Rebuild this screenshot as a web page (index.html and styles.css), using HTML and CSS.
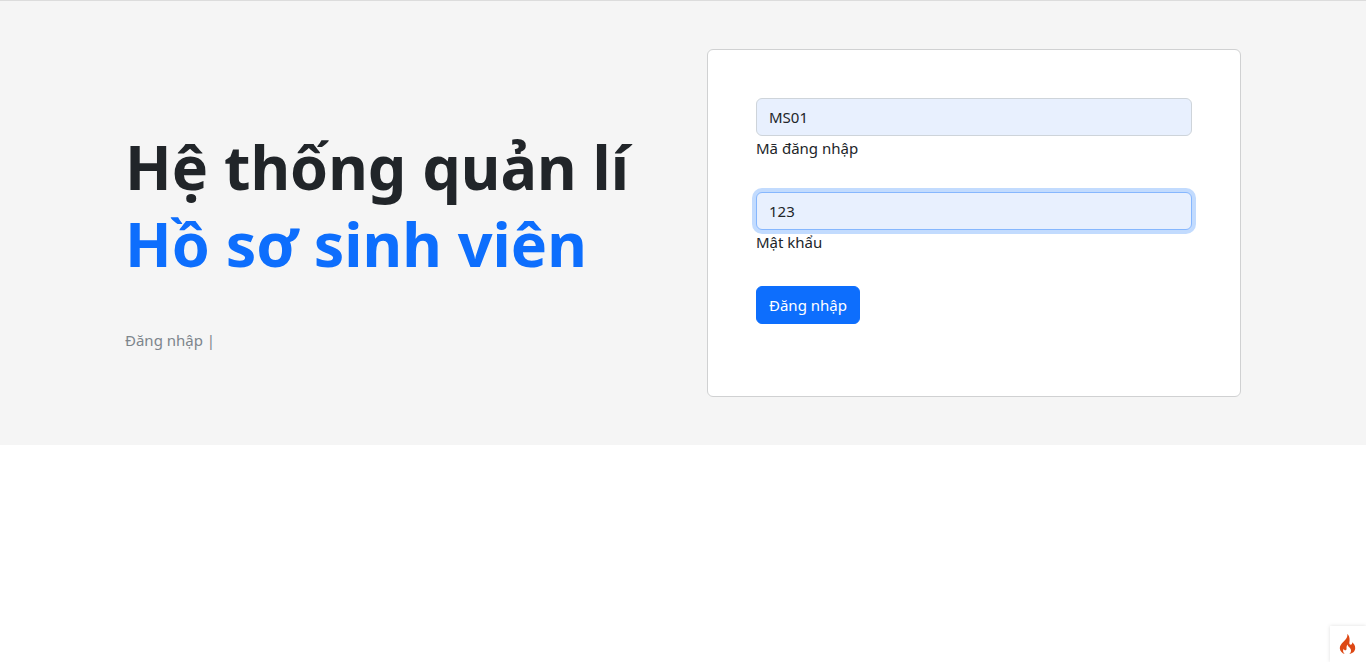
FILE: index.html
```
<!DOCTYPE html>
<html lang="vi">
<head>
<meta charset="utf-8">
<meta name="viewport" content="width=device-width, initial-scale=1">
<title>Đăng nhập</title>
<link rel="stylesheet" href="styles.css">
</head>
<body>
<main class="hero">
  <div class="container">
    <section class="intro">
      <h1 class="title">Hệ thống quản lí<br><span class="accent">Hồ sơ sinh viên</span></h1>
      <p class="lead">Đăng nhập |</p>
    </section>
    <section class="card">
      <form class="form">
        <div class="field">
          <input class="control" id="code" type="text" value="MS01">
          <label for="code">Mã đăng nhập</label>
        </div>
        <div class="field">
          <input class="control control-active" id="password" type="text" value="123">
          <label for="password">Mật khẩu</label>
        </div>
        <button class="button" type="submit">Đăng nhập</button>
      </form>
    </section>
  </div>
</main>
<button class="debug" type="button" aria-label="Debug">
  <svg class="flame" viewBox="0 0 16 20" aria-hidden="true"><path fill="#dd4814" d="M7.800 0C8.500 3 6.500 5.200 4.200 7.500C1.500 10 .3 12 .3 14.300C.4 17 2.500 19.300 5.200 20C3.600 18.600 3 16.800 4.200 14.800C4.500 16 5.300 16.500 6.300 16.200C8 15.500 6 13.200 8 10.500C8.200 12.800 11.500 13.800 11.500 16.500C11.500 18 11 19.200 9.800 20C13 19.400 15.500 17.500 15.700 14.200C15.800 11.600 14.400 9.800 12.700 8.300C12.900 9.600 12.300 10.700 11.200 10.700C9.300 10.700 9.900 8.500 10.100 6.500C10.300 3.500 9.300 1.200 7.800 0Z"/></svg>
</button>
</body>
</html>
```
FILE: styles.css
```
* { box-sizing: border-box; }
body {
  margin: 0;
  background: #fff;
  color: #212529;
  font-family: "Segoe UI", "Noto Sans", "Open Sans", sans-serif;
  font-size: 15px;
  line-height: 24px;
}
.hero {
  border-top: 1px solid #dcdcdc;
  background: #f5f5f5;
  padding: 48px 24px;
}
.container {
  display: grid;
  grid-template-columns: 1fr 1fr;
  gap: 48px;
  align-items: center;
  max-width: 1116px;
  margin: 0 auto;
}
.intro { padding-top: 34px; }
.title {
  margin: 0 0 46px;
  font-size: 61px;
  line-height: 77px;
  font-weight: 700;
  white-space: nowrap;
}
.accent { color: #0d6efd; }
.lead { margin: 0; color: #7d858c; }
.card {
  border: 1px solid #d0d1d2;
  border-radius: 6px;
  background: #fff;
  padding: 48px 48px 72px;
}
.field { margin-bottom: 32px; }
.field label { display: block; }
.control {
  display: block;
  width: 100%;
  height: 38px;
  padding: 6px 12px;
  border: 1px solid #ced4da;
  border-radius: 6px;
  background: #e8f0fe;
  color: #212529;
  font: inherit;
  outline: none;
}
.control-active {
  border-color: #86b7fe;
  box-shadow: 0 0 0 4px #c2dbfe;
}
.button {
  height: 38px;
  display: block;
  padding: 6px 12px;
  border: 1px solid #0d6efd;
  border-radius: 6px;
  background: #0d6efd;
  color: #fff;
  font: inherit;
}
.debug {
  position: fixed;
  right: 0;
  bottom: 0;
  width: 36px;
  height: 36px;
  padding: 8px 9px;
  border: 0;
  background: #fff;
  box-shadow: 0 0 4px #dfdfdf;
}
.flame { display: block; width: 17px; height: 20px; }
```
